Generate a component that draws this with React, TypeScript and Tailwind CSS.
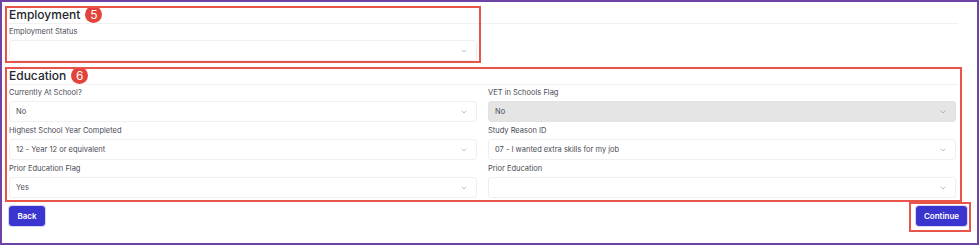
import { ChevronDown } from "lucide-react";

interface FieldProps {
  label: string;
  value?: string;
  disabled?: boolean;
}

const Field = ({ label, value, disabled }: FieldProps) => (
  <div className="flex flex-col">
    <label className="h-[11px] pt-[1px] text-[7.5px] leading-[9px] text-[#4a4a55]">
      {label}
    </label>
    <div
      className={
        disabled
          ? "mt-[3px] flex h-[21px] items-center justify-between rounded-[3px] border border-[#e2e2e2] bg-[#e5e5e5] pl-[6px] pr-[8px]"
          : "mt-[3px] flex h-[21px] items-center justify-between rounded-[3px] border border-[#efeff1] bg-white pl-[6px] pr-[8px]"
      }
    >
      <span className="text-[7.5px] text-[#4a4a55]">{value}</span>
      <ChevronDown className="h-[8px] w-[8px] text-[#9a9aa6]" strokeWidth={2} />
    </div>
  </div>
);

const Badge = ({ n }: { n: number }) => (
  <span className="ml-[5px] flex h-[17px] w-[17px] items-center justify-center rounded-full bg-[#e2433b] text-[12px] leading-none text-white">
    {n}
  </span>
);

const SectionTitle = ({ title, n }: { title: string; n: number }) => (
  <>
    <div className="flex h-[17px] items-center px-[2px]">
      <h2 className="text-[12px] font-medium leading-[17px] text-[#26262e]">
        {title}
      </h2>
      <Badge n={n} />
    </div>
    <div className="h-px bg-[#f1f1f3]" />
  </>
);

export default function App() {
  return (
    <div
      className="relative h-[245px] w-[979px] border-2 border-[#6f42a6] bg-white pt-[4px]"
      style={{ fontFamily: "Inter, 'Noto Sans', sans-serif" }}
    >
      <div className="ml-[5px] mr-[19px]">
        <SectionTitle title="Employment" n={5} />
        <div className="mt-[2px] grid grid-cols-2 gap-x-[11px] px-[2px]">
          <Field label="Employment Status" />
        </div>

        <div className="mt-[6px]">
          <SectionTitle title="Education" n={6} />
        </div>
        <div className="mt-[2px] grid grid-cols-2 gap-x-[11px] gap-y-[3px] px-[2px]">
          <Field label="Currently At School?" value="No" />
          <Field label="VET in Schools Flag" value="No" disabled />
          <Field label="Highest School Year Completed" value="12 - Year 12 or equivalent" />
          <Field label="Study Reason ID" value="07 - I wanted extra skills for my job" />
          <Field label="Prior Education Flag" value="Yes" />
          <Field label="Prior Education" />
        </div>
      </div>

      <div className="mt-[7px] flex items-center justify-between pl-[6px] pr-[9px]">
        <button className="h-[22px] w-[38px] rounded-[4px] border border-[#d8d6f6] bg-[#3b35d0] text-[8px] font-semibold text-white">
          Back
        </button>
        <button className="h-[22px] w-[53px] rounded-[4px] border border-[#d8d6f6] bg-[#3b35d0] text-[8px] font-semibold text-white">
          Continue
        </button>
      </div>

      {/* annotation boxes */}
      <div className="pointer-events-none absolute left-[3px] top-[4px] h-[57px] w-[476px] border-2 border-[#e8534a]" />
      <div className="pointer-events-none absolute left-[3px] top-[65px] h-[135px] w-[957px] border-2 border-[#e8534a]" />
      <div className="pointer-events-none absolute left-[907px] top-[200px] h-[30px] w-[62px] border-2 border-[#e8534a]" />
    </div>
  );
}
